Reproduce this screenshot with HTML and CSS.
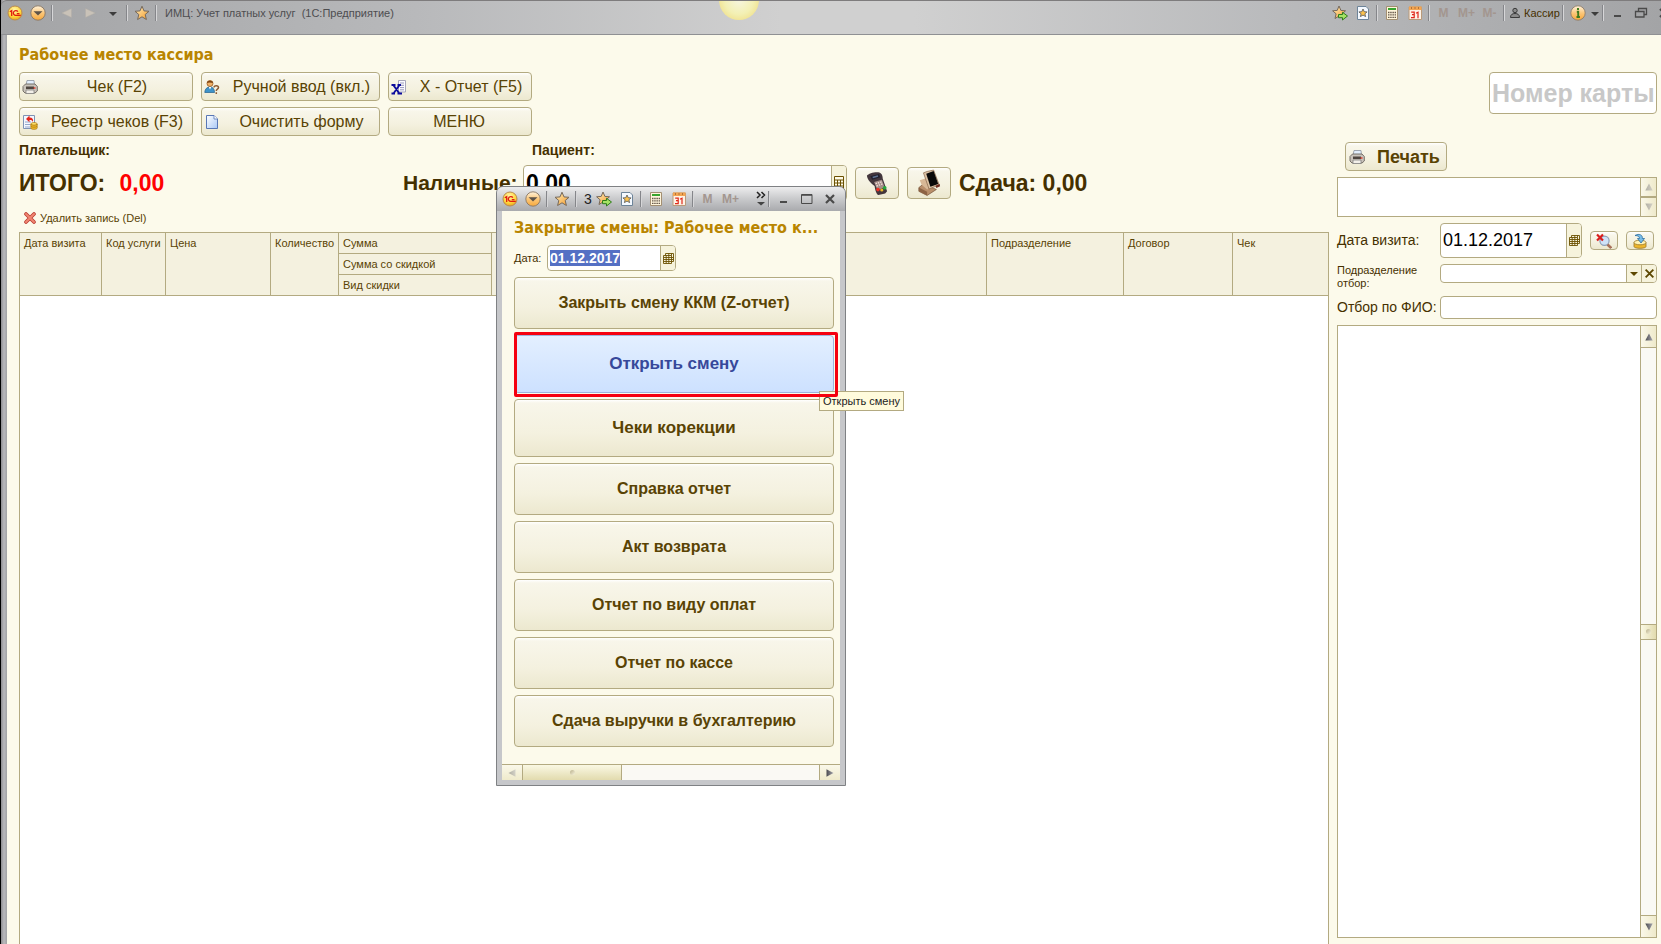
FILE: index.html
```html
<!DOCTYPE html>
<html lang="ru">
<head>
<meta charset="utf-8">
<title>ИМЦ: Учет платных услуг</title>
<link rel="stylesheet" href="styles.css">
</head>
<body>
<svg class="sprite" aria-hidden="true">
  <defs>
    <radialGradient id="g-yellow" cx=".45" cy=".3" r=".75"><stop offset="0" stop-color="#fff6b0"/><stop offset=".6" stop-color="#ffd83c"/><stop offset="1" stop-color="#e59a1c"/></radialGradient>
    <linearGradient id="g-orange" x1="0" y1="0" x2="0" y2="1"><stop offset="0" stop-color="#fff3dd"/><stop offset=".5" stop-color="#fbc77a"/><stop offset="1" stop-color="#f7a93c"/></linearGradient>
    <linearGradient id="g-star" x1="0" y1="0" x2="1" y2="1"><stop offset="0" stop-color="#fff0c0"/><stop offset="1" stop-color="#f59a28"/></linearGradient>
    <linearGradient id="g-sheet" x1="0" y1="0" x2="1" y2="1"><stop offset="0" stop-color="#ffffff"/><stop offset="1" stop-color="#a9c8f5"/></linearGradient>
    <linearGradient id="g-tri" x1="0" y1="0" x2="1" y2="0"><stop offset="0" stop-color="#4b4b50"/><stop offset="1" stop-color="#a5a5ad"/></linearGradient>
  </defs>
  <symbol id="i-1c" viewBox="0 0 16 16"><circle cx="8" cy="8" r="7" fill="url(#g-yellow)" stroke="#b98a50"/><path d="M2.800 6.800l1.900-1.200V11M10.900 6.600A2.500 2.400 0 1 0 9 10.400H13.800M9.800 8.600H12.500" fill="none" stroke="#e01b10" stroke-width="1.300"/></symbol>
  <symbol id="i-drop" viewBox="0 0 16 16"><circle cx="8" cy="8" r="7.200" fill="url(#g-orange)" stroke="#8a7763" stroke-width=".9"/><path d="M3.500 6.200h9L8 10.400z" fill="#5d5348"/></symbol>
  <symbol id="i-left" viewBox="0 0 16 16"><path d="M14 2v12L1 8z" fill="#c9c2b8" stroke="#b1aca6" stroke-width=".6"/></symbol>
  <symbol id="i-right" viewBox="0 0 16 16"><path d="M2 2v12l13-6z" fill="#c9c2b8" stroke="#b1aca6" stroke-width=".6"/></symbol>
  <symbol id="i-down" viewBox="0 0 16 16"><path d="M4 7h8l-4 4z" fill="#3c3c3c"/></symbol>
  <symbol id="i-star" viewBox="0 0 16 16"><path d="M8 1.200l2 4.700 5 .4-3.800 3.200 1.200 5L8 11.800l-4.400 2.700 1.200-5L1 6.300l5-.4z" fill="url(#g-star)" stroke="#76695b" stroke-width="1"/></symbol>
  <symbol id="i-staradd" viewBox="0 0 16 16"><path d="M7 1l1.900 4.400 4.600.4-3.500 3 1.100 4.700L7 11l-4 2.500 1.100-4.700-3.500-3 4.600-.4z" fill="url(#g-star)" stroke="#76695b"/><path d="M6.500 9.500h4V7.300L15.500 11l-5 4v-2.300h-4z" fill="#a5e265" stroke="#2f7d1c"/></symbol>
  <symbol id="i-favs" viewBox="0 0 16 16"><path d="M2.500 1.500h8.500l2.500 2.500v10.500h-11z" fill="#f4f9ff" stroke="#6d8499"/><path d="M8 4l1.200 2.700 2.900.2-2.200 1.900.7 2.800L8 10.100l-2.600 1.500.7-2.800-2.200-1.900 2.900-.2z" fill="#fbc24e" stroke="#555" stroke-width=".8"/></symbol>
  <symbol id="i-calc" viewBox="0 0 16 16"><path d="M2.500 1.500h11v13h-11z" fill="#fff5dc" stroke="#a38f72"/><path d="M4 3h8v2H4z" fill="#39a52f"/><path d="M4 7.500h8M4 9.900h8M4 12.300h8" stroke="#65574a" stroke-width="1.300" stroke-dasharray="1.500 .7"/></symbol>
  <symbol id="i-cal" viewBox="0 0 16 16"><path d="M2 2h12.500v12.500H2z" fill="#fff3e6" stroke="#b99a7a"/><path d="M2 1.500h12.500v3.500H2z" fill="#f3a552"/><path d="M4.500 2.500v1M8 2.500v1M11.500 2.500v1" stroke="#704020"/><path d="M4.200 7.200h3v2.500H5h2.200v3h-3.200M9 8.200l2-1v6" fill="none" stroke="#e0281a" stroke-width="1.200"/></symbol>
  <symbol id="i-user" viewBox="0 0 12 12"><circle cx="6" cy="3.500" r="2.200" fill="#8b8b8b" stroke="#3a3a3a"/><path d="M1.500 10.500c0-3 2-4 4.500-4s4.500 1 4.500 4z" fill="#8b8b8b" stroke="#3a3a3a"/></symbol>
  <symbol id="i-info" viewBox="0 0 16 16"><circle cx="8" cy="8" r="7.200" fill="url(#g-orange)" stroke="#8a7763" stroke-width=".8"/><path d="M8 3v2M6.800 6.800H8.200v5M6.500 12h3.400" fill="none" stroke="#3c7a1c" stroke-width="1.900"/></symbol>
  <symbol id="i-min" viewBox="0 0 16 16"><path d="M4 10h7v2H4z" fill="#4a4a4a"/></symbol>
  <symbol id="i-max" viewBox="0 0 16 16"><path d="M2.500 3.500h10.500v9H2.500z" fill="none" stroke="#4a4a4a"/><path d="M2.500 4.300h10.500" stroke="#4a4a4a"/></symbol>
  <symbol id="i-restore" viewBox="0 0 16 16"><path d="M5.500 6V3.500h8V9.500H11" fill="none" stroke="#4a4a4a" stroke-width="1.300"/><path d="M2.500 6.500h8.500v5.500H2.500z" fill="none" stroke="#4a4a4a" stroke-width="1.300"/></symbol>
  <symbol id="i-close" viewBox="0 0 16 16"><path d="M4 4l8 8M12 4l-8 8" stroke="#4a4a4a" stroke-width="2.200"/></symbol>
  <symbol id="i-more" viewBox="0 0 16 22"><path d="M4 4l3 3-3 3M8.500 4l3 3-3 3" fill="none" stroke="#222" stroke-width="1.500"/><path d="M4 14h8L8 17.500z" fill="#444"/></symbol>
  <symbol id="i-print" viewBox="0 0 16 16"><path d="M5 1.500h7l.5 5H4z" fill="#e2eefc" stroke="#8b93a0" stroke-width=".8"/><path d="M1 7.500L3.500 5h9.500L15.300 7.500v4.500L13 14H3l-2-2z" fill="#c9c3bb" stroke="#6a645e" stroke-width=".9"/><path d="M4 7.500h8v2.500H4z" fill="#4e4640"/><path d="M4 11h8v3.500H4z" fill="#f2efe9" stroke="#777" stroke-width=".7"/><path d="M11.500 9h2" stroke="#e0301f" stroke-width="1.300"/></symbol>
  <symbol id="i-who" viewBox="0 0 16 16"><circle cx="6" cy="4.500" r="3" fill="#f0b067" stroke="#9a5a1f" stroke-width=".8"/><path d="M3 4C3 1 9 1 9 4 7 3.500 5 3 3 4z" fill="#7c4312"/><path d="M.8 13.500C.8 10 3 8 6 8s4.500 2 4.500 5.500z" fill="#3d93c9" stroke="#215f8c" stroke-width=".7"/><path d="M4.800 8h2.600L6 10.500z" fill="#fff"/><path d="M10 8.500c0-2.500 4.500-2.200 4.500 0 0 1.800-2.200 1.600-2.200 3.500M12.300 13.200v1.800" fill="none" stroke="#8b5a33" stroke-width="1.500"/></symbol>
  <symbol id="i-xrep" viewBox="0 0 16 16"><path d="M7.500 1.500h7v11.500h-7z" fill="#fbfbff" stroke="#a7a7ba"/><path d="M9 4h4M9 6.300h4M9 8.600h4M9 10.800h4" stroke="#8d8db2" stroke-width=".9"/><path d="M.5 6h4M6.500 6H10M.5 14.500h3.500M6.500 14.500H11M2.300 6l6 8.500M8.500 6l-6 8.500" stroke="#0a0a9c" stroke-width="1.800" fill="none"/></symbol>
  <symbol id="i-reg" viewBox="0 0 16 16"><path d="M1.500 1.500h11v13h-11z" fill="#f3f7ff" stroke="#7f93b5"/><path d="M3 8h6M3 10.500h5M3 13h5" stroke="#94a8cc"/><path d="M4 5l3.500-3.500v2c3 0 4 1.500 3.500 4.500-.8-1.700-1.700-2-3.500-2v2.200z" fill="#e4251b"/><ellipse cx="12" cy="10" rx="3.200" ry="1.500" fill="#ffe36b" stroke="#a87912" stroke-width=".7"/><path d="M8.800 10v4c0 1.800 6.400 1.800 6.400 0v-4c0 1.500-6.400 1.500-6.400 0z" fill="#efb928" stroke="#a87912" stroke-width=".7"/><path d="M9 12.300c1 1.200 5 1.200 6 0" fill="none" stroke="#a87912" stroke-width=".7"/></symbol>
  <symbol id="i-sheet" viewBox="0 0 16 16"><path d="M2.500 1.500h7.500l3.500 3.500v9.500h-11z" fill="url(#g-sheet)" stroke="#5877b5"/><path d="M10 1.500V5h3.500" fill="#fff" stroke="#5877b5" stroke-width=".8"/></symbol>
  <symbol id="i-del" viewBox="0 0 12 12"><path d="M2 2l8 8M10 2l-8 8" stroke="#b9382f" stroke-width="3.600" stroke-linecap="round"/><path d="M2 2l8 8M10 2l-8 8" stroke="#f08672" stroke-width="2.100" stroke-linecap="round"/></symbol>
  <symbol id="i-term" viewBox="0 0 24 26"><path d="M1.500 5C3 2 11 .5 14.500 1.500 17 2.300 18 5 18 8l4.500 13-2 2.500-7 1.500c-2-1-3.500-5-4-9.500C6 13.500 2 9 1.500 5z" fill="#43363c"/><path d="M5 5.500l9-2.500 1.500 3.500-8.500 2.500z" fill="#20202e"/><path d="M7.500 6.800l5.500-1.600" stroke="#5f7190" stroke-width="1.500"/><path d="M9 11.500l8-2.500 3 8-7.500 3z" fill="#a58d89"/><path d="M10.500 13.200l6.500-2M11.500 15.600l6.500-2.200" stroke="#f0dfd9" stroke-width="1.400" stroke-dasharray="1.500 1"/><circle cx="13" cy="19.300" r="1.900" fill="#ee3024"/><circle cx="17" cy="19.800" r="1.600" fill="#e8b92a"/><circle cx="20" cy="17.500" r="1.900" fill="#26a63a"/></symbol>
  <symbol id="i-pos" viewBox="0 0 26 28"><path d="M2 19l5-4 14 6-10 6.500L2 23z" fill="#b98f6b" stroke="#6d4a32" stroke-width=".7"/><path d="M2 19l9 4.500v4L2 23z" fill="#8d6344"/><path d="M3 11l6-2 7 9-5 3-6-5z" fill="#d8b896"/><path d="M7 3l4-1.500L18 0l6 16-11 4.500z" fill="#ddc3a4" stroke="#7d5a40" stroke-width=".7"/><path d="M10 4l8-3 5 14-8.500 3z" fill="#090909"/><path d="M20 17l4.500-2 .5 2.500-4 2z" fill="#6f2b20"/></symbol>
  <symbol id="i-grid" viewBox="0 0 11 11"><path d="M2.500.5h8v8h-2M.5 2.500h8v8h-8zM.5 4.500h10M.5 6.500h10M.5 8.500h8M3.200 2.500v8M5.800.5v10M2.500.5v2M8.500.5v2" fill="none" stroke="#6b5000" stroke-width=".9"/></symbol>
  <symbol id="i-keys" viewBox="0 0 10 14"><path d="M.5.5h9v13h-9z" fill="#fffbe8" stroke="#6b5000"/><path d="M1 4h8M1 7h8M1 10h8M3.500 4v9M6.500 4v9" stroke="#6b5000"/></symbol>
  <symbol id="i-find" viewBox="0 0 16 16"><circle cx="8.500" cy="7.800" r="4.600" fill="#cfe2f8" stroke="#8d9fb8" stroke-width="1.200"/><path d="M11.500 11.500l3.700 3.500" stroke="#a8705a" stroke-width="2.600"/><path d="M1 1.500l6 6M7 1.500l-6 6" stroke="#d91e1e" stroke-width="2.200"/></symbol>
  <symbol id="i-save" viewBox="0 0 16 16"><path d="M2 9.500v4c0 2.400 12 2.400 12 0v-4z" fill="#edb62c" stroke="#9b7524" stroke-width=".8"/><ellipse cx="8" cy="9.500" rx="6" ry="2.300" fill="#fff3b5" stroke="#9b7524" stroke-width=".8"/><path d="M3 2.500C7 0 11 2 10.300 5.500H12.500L9 10 5.500 5.500h2C7.500 3.500 6 2.500 3 2.500z" fill="#78bce8" stroke="#2a6c9f" stroke-width=".8"/></symbol>
  <symbol id="i-x" viewBox="0 0 10 10"><path d="M1.500 1.500l7 7M8.500 1.500l-7 7" stroke="#5c4700" stroke-width="1.700"/></symbol>
  <symbol id="i-tdown" viewBox="0 0 8 8"><path d="M0 2h8L4 6z" fill="#5c4700"/></symbol>
  <symbol id="i-up-s" viewBox="0 0 8 8"><path d="M4 .5l3.700 7H.3z" fill="url(#g-tri)"/></symbol>
  <symbol id="i-down-s" viewBox="0 0 8 8"><path d="M.3.500h7.400L4 7.500z" fill="url(#g-tri)"/></symbol>
  <symbol id="i-left-s" viewBox="0 0 8 8"><path d="M7.500.3v7.400L.5 4z" fill="url(#g-tri)"/></symbol>
  <symbol id="i-right-s" viewBox="0 0 8 8"><path d="M.5.3v7.400L7.500 4z" fill="url(#g-tri)"/></symbol>
</svg>

<div class="window">
  <header class="titlebar">
    <button class="slot" aria-label="Главное меню"><svg class="ic"><use href="#i-1c"/></svg></button>
    <button class="slot" aria-label="Меню"><svg class="ic"><use href="#i-drop"/></svg></button>
    <i class="sep"></i>
    <button class="slot" aria-label="Назад"><svg class="ic12"><use href="#i-left"/></svg></button>
    <button class="slot" aria-label="Вперед"><svg class="ic12"><use href="#i-right"/></svg></button>
    <button class="slot" aria-label="История"><svg class="ic"><use href="#i-down"/></svg></button>
    <i class="sep"></i>
    <button class="slot" aria-label="Избранное"><svg class="ic"><use href="#i-star"/></svg></button>
    <i class="sep"></i>
    <span class="app-title">ИМЦ: Учет платных услуг &nbsp;(1С:Предприятие)</span>
    <div class="tools">
      <button class="slot" aria-label="Добавить в избранное"><svg class="ic"><use href="#i-staradd"/></svg></button>
      <button class="slot" aria-label="Список избранного"><svg class="ic"><use href="#i-favs"/></svg></button>
      <i class="sep"></i>
      <button class="slot" aria-label="Калькулятор"><svg class="ic"><use href="#i-calc"/></svg></button>
      <button class="slot" aria-label="Календарь"><svg class="ic"><use href="#i-cal"/></svg></button>
      <i class="sep"></i>
      <button class="slot mem">M</button>
      <button class="slot mem">M+</button>
      <button class="slot mem">M-</button>
      <i class="sep"></i>
      <button class="user"><svg class="ic12"><use href="#i-user"/></svg>Кассир</button>
      <i class="sep"></i>
      <button class="slot" aria-label="Справка"><svg class="ic"><use href="#i-info"/></svg></button>
      <button class="slot thin" aria-label="Еще"><svg class="ic"><use href="#i-down"/></svg></button>
      <i class="sep"></i>
      <button class="slot" aria-label="Свернуть"><svg class="ic"><use href="#i-min"/></svg></button>
      <button class="slot" aria-label="Восстановить"><svg class="ic"><use href="#i-restore"/></svg></button>
      <button class="slot" aria-label="Закрыть"><svg class="ic"><use href="#i-close"/></svg></button>
    </div>
    <span class="orb"></span>
  </header>

  <main class="form">
    <section class="work">
      <h1 class="heading">Рабочее место кассира</h1>
      <div class="commands">
        <button class="btn cmd"><svg class="ic"><use href="#i-print"/></svg><span>Чек (F2)</span></button>
        <button class="btn cmd"><svg class="ic"><use href="#i-who"/></svg><span>Ручной ввод (вкл.)</span></button>
        <button class="btn cmd"><svg class="ic"><use href="#i-xrep"/></svg><span>X - Отчет (F5)</span></button>
        <button class="btn cmd"><svg class="ic"><use href="#i-reg"/></svg><span>Реестр чеков (F3)</span></button>
        <button class="btn cmd"><svg class="ic"><use href="#i-sheet"/></svg><span>Очистить форму</span></button>
        <button class="btn cmd plain"><span>МЕНЮ</span></button>
      </div>
      <div class="people"><span class="payer">Плательщик:</span><span>Пациент:</span></div>
      <div class="totals">
        <span class="sum">ИТОГО: <b class="red">0,00</b></span>
        <label for="cash">Наличные:</label>
        <div class="field cash"><input id="cash" value="0,00"><button class="pick" aria-label="Калькулятор"><svg class="keys"><use href="#i-keys"/></svg></button></div>
        <button class="btn pay" aria-label="Оплата картой"><svg class="term"><use href="#i-term"/></svg></button>
        <button class="btn pay" aria-label="Касса"><svg class="pos"><use href="#i-pos"/></svg></button>
        <span class="change">Сдача: 0,00</span>
      </div>
      <button class="delete"><svg class="ic12"><use href="#i-del"/></svg>Удалить запись (Del)</button>
      <div class="grid">
        <table>
          <colgroup><col class="c1"><col class="c2"><col class="c3"><col class="c4"><col class="c5"><col><col class="c7"><col class="c8"><col class="c9"></colgroup>
          <thead>
            <tr><th rowspan="3">Дата визита</th><th rowspan="3">Код услуги</th><th rowspan="3">Цена</th><th rowspan="3">Количество</th><th>Сумма</th><th rowspan="3"></th><th rowspan="3">Подразделение</th><th rowspan="3">Договор</th><th rowspan="3">Чек</th></tr>
            <tr><th>Сумма со скидкой</th></tr>
            <tr><th>Вид скидки</th></tr>
          </thead>
        </table>
      </div>
    </section>

    <aside class="side">
      <input class="card" placeholder="Номер карты" aria-label="Номер карты">
      <button class="btn print"><svg class="ic"><use href="#i-print"/></svg>Печать</button>
      <div class="memo">
        <textarea aria-label="Сообщение"></textarea>
        <div class="vbar off"><button aria-label="Вверх"><svg class="ic8"><use href="#i-up-s"/></svg></button><button aria-label="Вниз"><svg class="ic8"><use href="#i-down-s"/></svg></button></div>
      </div>
      <div class="row date-row">
        <label for="visit">Дата визита:</label>
        <div class="field visit"><input id="visit" value="01.12.2017"><button class="pick" aria-label="Выбрать дату"><svg class="ic10"><use href="#i-grid"/></svg></button></div>
        <button class="btn tiny" aria-label="Отменить поиск"><svg class="ic"><use href="#i-find"/></svg></button>
        <button class="btn tiny" aria-label="Обновить"><svg class="ic"><use href="#i-save"/></svg></button>
      </div>
      <div class="row">
        <label for="dept" class="small">Подразделение отбор:</label>
        <div class="field dept"><input id="dept"><button class="pick" aria-label="Выбрать"><svg class="ic8"><use href="#i-tdown"/></svg></button><button class="pick" aria-label="Очистить"><svg class="ic10"><use href="#i-x"/></svg></button></div>
      </div>
      <div class="row">
        <label for="fio">Отбор по ФИО:</label>
        <div class="field fio"><input id="fio"></div>
      </div>
      <div class="list">
        <div class="list-body"></div>
        <div class="vbar"><button aria-label="Вверх"><svg class="ic8"><use href="#i-up-s"/></svg></button><span class="track"><span class="thumb"></span></span><button aria-label="Вниз"><svg class="ic8"><use href="#i-down-s"/></svg></button></div>
      </div>
    </aside>
  </main>
</div>

<div class="dialog" role="dialog" aria-labelledby="dlg-title">
  <header class="dlg-bar">
    <button class="slot" aria-label="Главное меню"><svg class="ic"><use href="#i-1c"/></svg></button>
    <button class="slot" aria-label="Меню"><svg class="ic"><use href="#i-drop"/></svg></button>
    <i class="sep"></i>
    <button class="slot" aria-label="Избранное"><svg class="ic"><use href="#i-star"/></svg></button>
    <i class="sep"></i>
    <span class="count">3</span>
    <button class="slot" aria-label="Добавить в избранное"><svg class="ic"><use href="#i-staradd"/></svg></button>
    <button class="slot" aria-label="Список избранного"><svg class="ic"><use href="#i-favs"/></svg></button>
    <i class="sep"></i>
    <button class="slot" aria-label="Калькулятор"><svg class="ic"><use href="#i-calc"/></svg></button>
    <button class="slot" aria-label="Календарь"><svg class="ic"><use href="#i-cal"/></svg></button>
    <i class="sep"></i>
    <button class="slot mem">M</button>
    <button class="slot mem">M+</button>
    <div class="dlg-end">
      <button class="slot thin" aria-label="Еще"><svg class="more"><use href="#i-more"/></svg></button>
      <i class="sep"></i>
      <button class="slot" aria-label="Свернуть"><svg class="ic"><use href="#i-min"/></svg></button>
      <button class="slot" aria-label="Развернуть"><svg class="ic"><use href="#i-max"/></svg></button>
      <button class="slot" aria-label="Закрыть"><svg class="ic"><use href="#i-close"/></svg></button>
    </div>
  </header>
  <div class="dlg-body">
    <h2 class="heading" id="dlg-title">Закрытие смены: Рабочее место к...</h2>
    <div class="dlg-date">
      <label for="shift">Дата:</label>
      <div class="field shift"><input id="shift" value="01.12.2017" autofocus><button class="pick" aria-label="Выбрать дату"><svg class="ic10"><use href="#i-grid"/></svg></button></div>
    </div>
    <div class="actions">
      <button class="btn act">Закрыть смену ККМ (Z-отчет)</button>
      <button class="btn act tall hot">Открыть смену</button>
      <button class="btn act tall">Чеки корекции</button>
      <button class="btn act">Справка отчет</button>
      <button class="btn act">Акт возврата</button>
      <button class="btn act">Отчет по виду оплат</button>
      <button class="btn act">Отчет по кассе</button>
      <button class="btn act">Сдача выручки в бухгалтерию</button>
    </div>
    <div class="hbar"><button class="off" aria-label="Влево"><svg class="ic8"><use href="#i-left-s"/></svg></button><span class="thumb"></span><span class="rest"></span><button aria-label="Вправо"><svg class="ic8"><use href="#i-right-s"/></svg></button></div>
  </div>
  <div class="tooltip" role="tooltip">Открыть смену</div>
</div>
<script src="app.js"></script>
</body>
</html>
```
FILE: app.js
```js
const shift = document.getElementById('shift');
shift.focus();
shift.select();
```
FILE: styles.css
```css
* { box-sizing: border-box; }
body { margin: 0; font: 11px/14px "Liberation Sans", Arial, sans-serif; color: #453000; overflow: hidden; }
button, input, textarea { font: inherit; color: inherit; margin: 0; padding: 0; border: 0; background: none; outline: none; }
.sprite { position: absolute; width: 0; height: 0; }
svg { flex: none; display: block; }
.ic { width: 16px; height: 16px; }
.ic12 { width: 12px; height: 12px; }
.ic10 { width: 11px; height: 11px; }
.ic8 { width: 8px; height: 8px; }

.window { display: flex; flex-direction: column; height: 100vh; border-left: 1px solid #000; background: linear-gradient(90deg, #8d8d90, #b9b9bc 3px, #a2a3a5 6px); padding-left: 6px; }
.titlebar { position: relative; display: flex; align-items: center; height: 35px; margin-left: -6px; padding: 0 0 9px 2px; overflow: hidden; border-top: 1px solid #7e7c7d; border-bottom: 1px solid #8f9093; border-top-left-radius: 6px; background: linear-gradient(90deg, #a3a4a6, #b8b9bb 25%, #d0d0d0 47%, #d0d0d0 55%, #b8b9bb 78%, #a3a4a6); }
.slot { flex: none; width: 23px; height: 22px; display: flex; align-items: center; justify-content: center; }
.slot.thin { width: 11px; }
.sep { flex: none; width: 6px; height: 16px; background: linear-gradient(90deg, transparent 2px, #85868a 2px, #85868a 3px, #d6d6d8 3px, #d6d6d8 4px, transparent 4px); }
.mem { color: #a3968f; font-size: 12px; font-weight: bold; }
.app-title { margin-left: 6px; color: #4d4d50; white-space: nowrap; }
.tools { display: flex; align-items: center; margin-left: auto; margin-right: -14px; }
.user { display: flex; align-items: center; gap: 3px; height: 22px; width: 53px; padding-left: 2px; }
.orb { position: absolute; left: 718px; top: -21px; width: 40px; height: 40px; border-radius: 50%; background: radial-gradient(#f6f5df, #f3f0b4 50%, #eed672); }

.form { flex: 1; min-height: 0; display: flex; gap: 8px; background: #fcfaeb; padding: 0 4px 0 12px; }
.work { flex: 1; min-width: 0; display: flex; flex-direction: column; }
.heading { margin: 0; font: bold 16px/20px "DejaVu Sans Condensed", "Noto Sans", sans-serif; color: #b98500; white-space: nowrap; }
.work .heading { margin: 10px 0 7px; }
.btn { border: 1px solid #b3aa81; border-radius: 4px; background: linear-gradient(#fff, #f8f6ea 3px, #f4f1df 60%, #ece8cf); color: #594304; display: flex; align-items: center; justify-content: center; }
.commands { display: grid; grid-template-columns: 174px 179px 144px; gap: 6px 8px; }
.cmd { height: 29px; padding: 0 4px 0 2px; font-size: 16px; line-height: 20px; white-space: nowrap; }
.cmd span { flex: 1; text-align: center; padding-left: 8px; }
.plain span { padding: 0; }
.people { display: flex; margin-top: 5px; font-weight: bold; font-size: 14px; line-height: 18px; }
.payer { width: 513px; }
.totals { display: flex; align-items: center; height: 38px; margin-top: 5px; font-weight: bold; font-size: 23px; line-height: 26px; white-space: nowrap; }
.sum { width: 384px; }
.red { color: #f00; margin-left: 8px; }
.field { display: flex; background: #fff; border: 1px solid #b3aa81; border-radius: 4px; overflow: hidden; }
.field input { flex: 1; min-width: 0; padding: 0 2px; color: #000; }
.pick { flex: none; width: 15px; border-left: 1px solid #b3aa81; background: #f6f3dc; display: flex; align-items: center; justify-content: center; }
.keys { width: 10px; height: 14px; }
.totals label { width: 120px; font-size: 21px; }
.cash { width: 324px; height: 36px; }
.pay { width: 44px; height: 32px; margin-left: 8px; }
.term { width: 24px; height: 25px; }
.pos { width: 24px; height: 28px; }
.change { margin-left: 8px; }
.delete { display: flex; align-items: center; gap: 4px; height: 20px; margin: 6px 0 4px 5px; align-self: flex-start; color: #594304; }
.grid { flex: 1; background: #fff; border: solid #b3aa81; border-width: 1px 1px 0; }
.grid table { width: 100%; border-collapse: separate; border-spacing: 0; table-layout: fixed; background: #f4f1df; }
.grid th { height: 21px; padding: 3px 4px; border: solid #b3aa81; border-width: 0 0 1px 1px; font-weight: normal; text-align: left; vertical-align: top; color: #594304; white-space: nowrap; }
.grid th:first-child[rowspan] { border-left: 0; }
.c1 { width: 81px; } .c2 { width: 64px; } .c3 { width: 105px; } .c4 { width: 68px; } .c5 { width: 153px; }
.c7 { width: 137px; } .c8 { width: 109px; } .c9 { width: 96px; }

.side { flex: none; width: 320px; display: flex; flex-direction: column; padding: 37px 0 6px; }
.card { align-self: flex-end; width: 168px; height: 42px; padding: 0 2px; background: #fff; border: 1px solid #b3aa81; border-radius: 4px; font-size: 25px; font-weight: bold; }
.card::placeholder { color: #c8c8c8; opacity: 1; }
.print { width: 102px; height: 29px; margin: 28px 0 6px 8px; padding-left: 3px; gap: 12px; justify-content: flex-start; font-size: 18px; font-weight: bold; }
.memo { display: flex; height: 40px; border: 1px solid #b3aa81; background: #fff; }
.memo textarea { flex: 1; resize: none; overflow: hidden; }
.vbar { flex: none; width: 16px; display: flex; flex-direction: column; border-left: 1px solid #b3aa81; background: #faf9f4; }
.vbar button { flex: none; height: 21px; display: flex; align-items: center; justify-content: center; background: linear-gradient(90deg, #faf8ea, #efeacb); }
.vbar.off button { flex: 1; height: auto; }
.off button + button { border-top: 2px solid #b3aa81; }
.off svg { opacity: .4; }
.track { flex: 1; display: flex; align-items: center; border: solid #b3aa81; border-width: 1px 0; }
.thumb { display: flex; align-items: center; justify-content: center; background: linear-gradient(90deg, #faf8e4, #e2dbae); }
.thumb::before { content: ""; width: 5px; height: 5px; border-radius: 50%; background: linear-gradient(135deg, #b9b08c, #f7f3dc); }
.track .thumb { width: 100%; height: 16px; border: solid #b3aa81; border-width: 1px 0; }
.row { display: flex; align-items: flex-start; margin-top: 6px; font-size: 14px; line-height: 17px; }
.row label { width: 103px; white-space: nowrap; padding-top: 3px; }
.row .small { font-size: 11px; line-height: 13px; white-space: normal; padding: 0 8px 0 0; }
.date-row { align-items: center; }
.date-row label { padding: 0; }
.visit { width: 142px; height: 35px; font-size: 18px; }
.tiny { width: 28px; height: 19px; margin-left: 8px; }
.dept, .fio { flex: 1; height: 19px; }
.fio { height: 23px; }
.list { flex: 1; display: flex; margin-top: 6px; border: 1px solid #b3aa81; background: #fff; min-height: 0; }
.list-body { flex: 1; }

.dialog { position: absolute; left: 496px; top: 186px; width: 350px; border: 1px solid #7f8184; border-radius: 7px 7px 0 0; background: #c6c7ca; padding: 0 5px 5px; }
.dlg-bar { display: flex; align-items: center; height: 24px; margin: 0 -5px; padding-left: 1px; border-radius: 6px 6px 0 0; background: linear-gradient(#ededee, #c8c9cb 50%, #a9aaad); }
.dlg-bar .count { flex: none; width: 13px; padding-left: 5px; font-size: 14px; color: #222; }
.dlg-end { display: flex; align-items: center; margin-left: auto; margin-right: 4px; }
.more { width: 16px; height: 22px; }
.dlg-body { background: #fcfaeb; padding-top: 7px; }
.dlg-body .heading { margin: 0 12px 7px; }
.dlg-date { display: flex; align-items: center; margin: 0 12px 6px; }
.dlg-date label { width: 33px; }
.shift { width: 129px; height: 26px; font-size: 14px; font-weight: bold; }
.shift ::selection { background: #5470c4; color: #fff; }
.actions { display: flex; flex-direction: column; gap: 6px; margin: 0 6px 17px 12px; }
.act { height: 52px; font-size: 16px; font-weight: bold; }
.tall { height: 58px; font-size: 17px; }
.hot { position: relative; background: linear-gradient(#e3efff, #cde1ff); border-color: #9db4dc; color: #37489a; }
.hot::after { content: ""; position: absolute; inset: -4px -5px -5px -1px; border: 3px solid #f5000f; border-radius: 2px; z-index: 2; }
.hbar { display: flex; height: 16px; border-top: 1px solid #b3aa81; background: #faf9f4; }
.hbar button { width: 20px; display: flex; align-items: center; justify-content: center; background: linear-gradient(#faf8ea, #efeacb); }
.hbar .thumb { width: 100px; border: solid #b3aa81; border-width: 0 1px; background: linear-gradient(#faf8e4, #e2dbae); }
.rest { flex: 1; border-right: 1px solid #b3aa81; }
.off > svg { opacity: .4; }
.tooltip { position: absolute; left: 322px; top: 204px; padding: 2px 3px; border: 1px solid #b3aa81; background: #fffbdc; color: #222; white-space: nowrap; z-index: 1; }
```
